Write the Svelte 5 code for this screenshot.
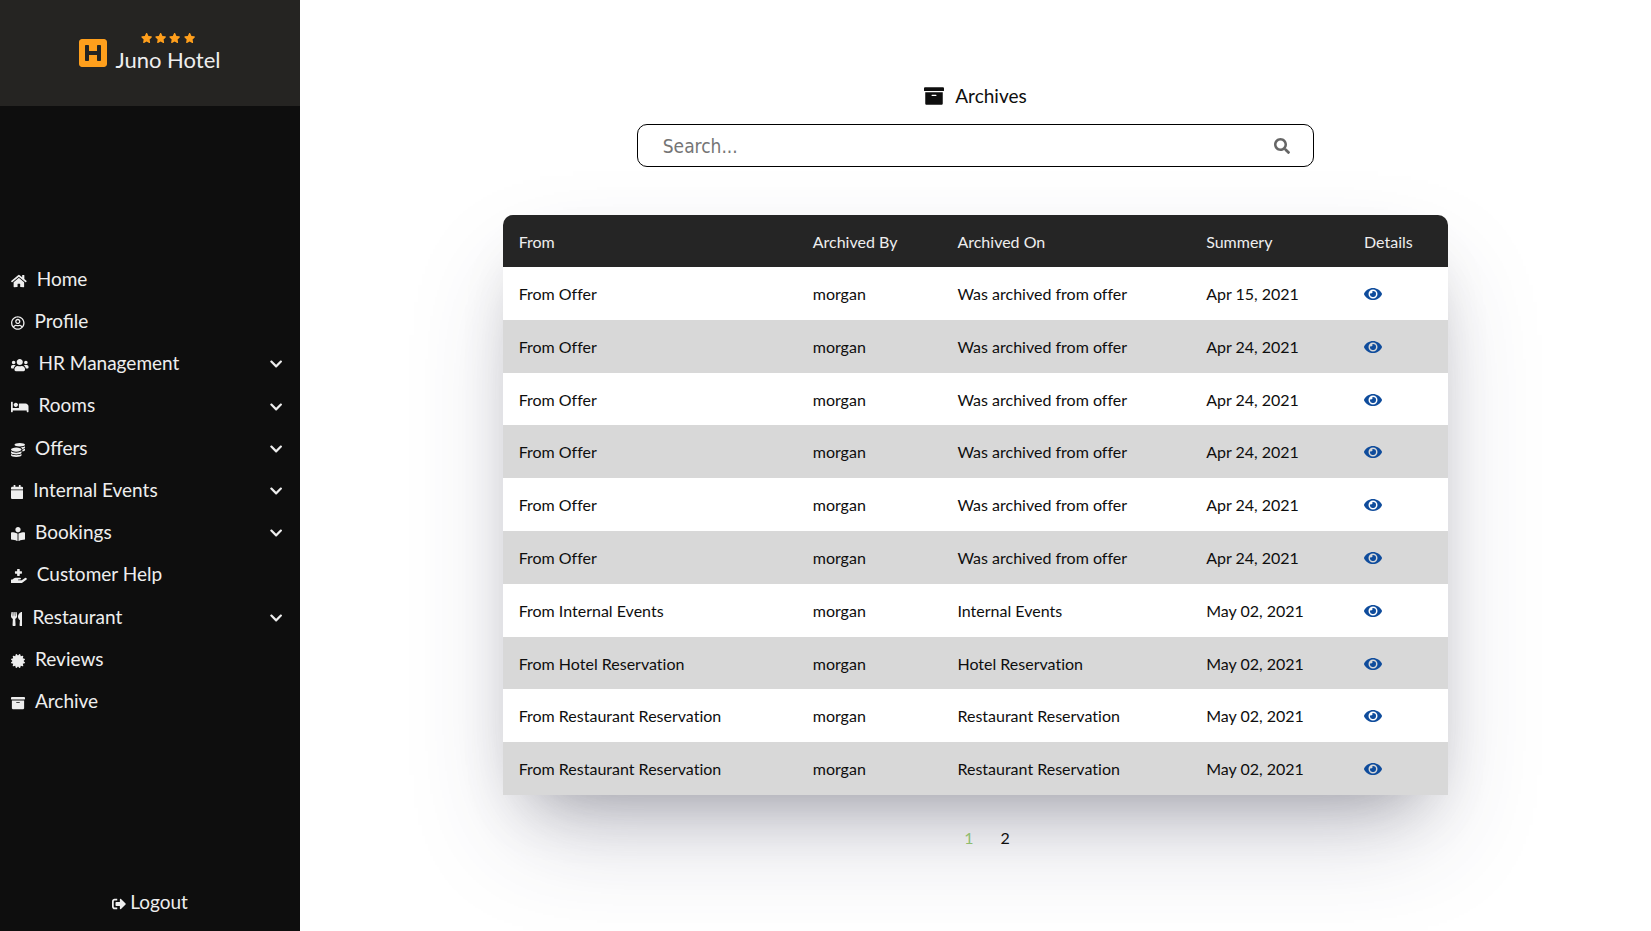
<script>
  const icons = {
    home: [576, 'M280.37 148.26L96 300.11V464a16 16 0 0 0 16 16l112.06-.29a16 16 0 0 0 15.92-16V368a16 16 0 0 1 16-16h64a16 16 0 0 1 16 16v95.64a16 16 0 0 0 16 16.05L464 480a16 16 0 0 0 16-16V300L295.67 148.26a12.19 12.19 0 0 0-15.3 0zM571.6 251.47L488 182.56V44.05a12 12 0 0 0-12-12h-56a12 12 0 0 0-12 12v72.61L318.47 43a48 48 0 0 0-61 0L4.34 251.47a12 12 0 0 0-1.6 16.9l25.5 31A12 12 0 0 0 45.15 301l235.22-193.74a12.19 12.19 0 0 1 15.3 0L530.9 301a12 12 0 0 0 16.9-1.6l25.5-31a12 12 0 0 0-1.7-16.93z'],
    profile: [496, 'M248 104c-53 0-96 43-96 96s43 96 96 96 96-43 96-96-43-96-96-96zm0 144c-26.5 0-48-21.5-48-48s21.5-48 48-48 48 21.5 48 48-21.5 48-48 48zm0-240C111 8 0 119 0 256s111 248 248 248 248-111 248-248S385 8 248 8zm0 448c-49.7 0-95.1-18.3-130.1-48.4 14.9-23 40.4-38.6 69.6-39.5 20.8 6.4 40.6 9.6 60.5 9.6s39.7-3.1 60.5-9.6c29.2 1 54.7 16.5 69.6 39.5-35 30.1-80.4 48.4-130.1 48.4zm162.7-84.1c-24.4-31.4-62.1-51.9-105.1-51.9-10.2 0-26 9.6-57.6 9.6-31.5 0-47.4-9.6-57.6-9.6-42.9 0-80.6 20.5-105.1 51.9C61.9 339.2 48 299.2 48 256c0-110.3 89.7-200 200-200s200 89.7 200 200c0 43.2-13.9 83.2-37.3 115.9z'],
    users: [640, 'M96 224c35.3 0 64-28.7 64-64s-28.7-64-64-64-64 28.7-64 64 28.7 64 64 64zm448 0c35.3 0 64-28.7 64-64s-28.7-64-64-64-64 28.7-64 64 28.7 64 64 64zm32 32h-64c-17.6 0-33.5 7.1-45.1 18.6 40.3 22.1 68.9 62 75.1 109.4h66c17.7 0 32-14.3 32-32v-32c0-35.3-28.7-64-64-64zm-256 0c61.9 0 112-50.1 112-112S381.9 32 320 32 208 82.1 208 144s50.1 112 112 112zm76.8 32h-8.3c-20.8 10-43.9 16-68.5 16s-47.6-6-68.5-16h-8.3C179.6 288 128 339.6 128 403.2V432c0 26.5 21.5 48 48 48h288c26.5 0 48-21.5 48-48v-28.8c0-63.6-51.6-115.2-115.2-115.2zm-223.7-13.4C161.5 263.1 145.6 256 128 256H64c-35.3 0-64 28.7-64 64v32c0 17.7 14.3 32 32 32h65.9c6.3-47.4 34.9-87.3 75.2-109.4z'],
    bed: [640, 'M176 256c44.11 0 80-35.89 80-80s-35.89-80-80-80-80 35.89-80 80 35.89 80 80 80zm352-128H304c-8.84 0-16 7.16-16 16v144H64V80c0-8.84-7.16-16-16-16H16C7.16 64 0 71.16 0 80v352c0 8.84 7.16 16 16 16h32c8.84 0 16-7.16 16-16v-48h512v48c0 8.84 7.16 16 16 16h32c8.84 0 16-7.16 16-16V240c0-61.86-50.14-112-112-112z'],
    coins: [512, 'M0 405.3V448c0 35.3 86 64 192 64s192-28.7 192-64v-42.7C342.7 434.4 267.2 448 192 448S41.3 434.4 0 405.3zM320 128c106 0 192-28.7 192-64S426 0 320 0 128 28.7 128 64s86 64 192 64zM0 300.4V352c0 35.3 86 64 192 64s192-28.7 192-64v-51.6c-41.3 34-116.9 51.6-192 51.6S41.3 334.4 0 300.4zm416 11c57.3-11.1 96-31.7 96-55.4v-42.7c-23.2 16.4-57.3 27.6-96 34.5v63.6zM192 160C86 160 0 195.8 0 240s86 80 192 80 192-35.8 192-80-86-80-192-80zm219.3 56.3c60-10.8 100.7-32 100.7-56.3v-42.7c-35.5 25.1-96.5 38.6-160.7 41.8 29.5 14.3 51.2 33.5 60 57.2z'],
    calendar: [448, 'M12 192h424c6.6 0 12 5.4 12 12v260c0 26.5-21.5 48-48 48H48c-26.5 0-48-21.5-48-48V204c0-6.6 5.4-12 12-12zm436-44v-36c0-26.5-21.5-48-48-48h-48V12c0-6.6-5.4-12-12-12h-40c-6.6 0-12 5.4-12 12v52H160V12c0-6.6-5.4-12-12-12h-40c-6.6 0-12 5.4-12 12v52H48C21.5 64 0 85.5 0 112v36c0 6.6 5.4 12 12 12h424c6.6 0 12-5.4 12-12z'],
    reader: [512, 'M352 96c0-53.02-42.98-96-96-96s-96 42.98-96 96 42.98 96 96 96 96-42.98 96-96zM233.59 241.1c-59.33-36.32-155.43-46.3-203.79-49.05C13.55 191.13 0 203.51 0 219.14v222.8c0 14.33 11.59 26.28 26.49 27.05 43.66 2.29 131.99 10.68 193.04 41.43 9.37 4.72 20.48-1.71 20.48-11.87V252.56c-.01-4.67-2.32-8.95-6.42-11.46zm248.61-49.05c-48.35 2.74-144.46 12.73-203.78 49.05-4.1 2.51-6.41 6.96-6.41 11.63v245.79c0 10.19 11.14 16.63 20.54 11.9 61.04-30.72 149.32-39.11 192.97-41.4 14.9-.78 26.49-12.73 26.49-27.06V219.14c-.01-15.63-13.56-28.01-29.81-27.09z'],
    help: [576, 'M159.88,175.82h64v64a16,16,0,0,0,16,16h64a16,16,0,0,0,16-16v-64h64a16,16,0,0,0,16-16v-64a16,16,0,0,0-16-16h-64v-64a16,16,0,0,0-16-16h-64a16,16,0,0,0-16,16v64h-64a16,16,0,0,0-16,16v64A16,16,0,0,0,159.88,175.82ZM568.07,336.13a39.91,39.91,0,0,0-55.93-8.47L392.47,415.84H271.86a16,16,0,0,1,0-32H330.1c16,0,30.75-10.87,33.37-26.61a32.06,32.06,0,0,0-31.62-37.38h-160a117.7,117.7,0,0,0-74.12,26.25l-46.5,37.74H15.87a16.11,16.11,0,0,0-16,16v96a16.11,16.11,0,0,0,16,16h347a104.8,104.8,0,0,0,61.7-20.27L559.6,392.05A40,40,0,0,0,568.07,336.13Z'],
    utensils: [416, 'M207.9 15.2c.8 4.7 16.1 94.5 16.1 128.8 0 52.3-27.8 89.6-68.9 104.6L168 486.7c.7 13.7-10.2 25.3-24 25.3H80c-13.7 0-24.7-11.5-24-25.3l12.9-238.1C27.7 233.6 0 196.2 0 144 0 109.6 15.3 19.9 16.1 15.2 19.3-5.1 61.4-5.4 64 16.3v141.2c1.3 3.4 15.1 3.2 16 0 1.4-25.3 7.9-139.2 8-141.8 3.3-20.8 44.7-20.8 47.9 0 .2 2.7 6.6 116.5 8 141.8.9 3.2 14.8 3.4 16 0V16.3c2.6-21.6 44.8-21.4 48-1.1zm119.2 285.7l-15 185.1c-1.2 14 9.9 26 23.9 26h56c13.3 0 24-10.7 24-24V24c0-13.2-10.7-24-24-24-82.5 0-221.4 178.5-64.9 300.9z'],
    certificate: [512, 'M458.622 255.92l45.985-45.005c13.708-12.977 7.316-36.039-10.664-40.339l-62.65-15.99 17.661-62.015c4.991-17.838-11.829-34.663-29.661-29.671l-61.994 17.667-15.984-62.671C337.085.197 313.765-6.276 300.99 7.228L256 53.57 211.011 7.229c-12.63-13.351-36.047-7.234-40.325 10.668l-15.984 62.671-61.995-17.667C74.87 57.907 58.056 74.738 63.046 92.572l17.661 62.015-62.65 15.99C.069 174.878-6.31 197.944 7.392 210.915l45.985 45.005-45.985 45.004c-13.708 12.977-7.316 36.039 10.664 40.339l62.65 15.99-17.661 62.015c-4.991 17.838 11.829 34.663 29.661 29.671l61.994-17.667 15.984 62.671c4.439 18.575 27.696 24.018 40.325 10.668L256 458.61l44.989 46.001c12.5 13.488 35.987 7.486 40.325-10.668l15.984-62.671 61.994 17.667c17.836 4.994 34.651-11.837 29.661-29.671l-17.661-62.015 62.65-15.99c17.987-4.302 24.366-27.367 10.664-40.339l-45.984-45.004z'],
    archive: [512, 'M32 448c0 17.7 14.3 32 32 32h384c17.7 0 32-14.3 32-32V160H32v288zm160-212c0-6.6 5.4-12 12-12h104c6.6 0 12 5.4 12 12v8c0 6.6-5.4 12-12 12H204c-6.6 0-12-5.4-12-12v-8zM480 32H32C14.3 32 0 46.3 0 64v48c0 8.8 7.2 16 16 16h480c8.8 0 16-7.2 16-16V64c0-17.7-14.3-32-32-32z'],
    logout: [512, 'M497 273L329 441c-15 15-41 4.5-41-17v-96H152c-13.3 0-24-10.7-24-24v-96c0-13.3 10.7-24 24-24h136V88c0-21.4 25.9-32 41-17l168 168c9.3 9.4 9.3 24.6 0 34zM192 436v-40c0-6.6-5.4-12-12-12H96c-17.7 0-32-14.3-32-32V160c0-17.7 14.3-32 32-32h84c6.6 0 12-5.4 12-12V76c0-6.6-5.4-12-12-12H96c-53 0-96 43-96 96v192c0 53 43 96 96 96h84c6.6 0 12-5.4 12-12z'],
    chevron: [448, 'M207.029 381.476L12.686 187.132c-9.373-9.373-9.373-24.569 0-33.941l22.667-22.667c9.357-9.357 24.522-9.375 33.901-.04L224 284.505l154.745-154.021c9.379-9.335 24.544-9.317 33.901.04l22.667 22.667c9.373 9.373 9.373 24.569 0 33.941L240.971 381.476c-9.373 9.372-24.569 9.372-33.942 0z'],
    eye: [576, 'M572.52 241.4C518.29 135.59 410.93 64 288 64S57.68 135.64 3.48 241.41a32.35 32.35 0 0 0 0 29.19C57.71 376.41 165.07 448 288 448s230.32-71.64 284.52-177.41a32.35 32.35 0 0 0 0-29.19zM288 400a144 144 0 1 1 144-144 143.93 143.93 0 0 1-144 144zm0-240a95.31 95.31 0 0 0-25.31 3.79 47.85 47.85 0 0 1-66.9 66.9A95.78 95.78 0 1 0 288 160z'],
    search: [512, 'M505 442.7L405.3 343c-4.5-4.5-10.6-7-17-7H372c27.6-35.3 44-79.7 44-128C416 93.1 322.9 0 208 0S0 93.1 0 208s93.1 208 208 208c48.3 0 92.7-16.4 128-44v16.3c0 6.4 2.5 12.5 7 17l99.7 99.7c9.4 9.4 24.6 9.4 33.9 0l28.3-28.3c9.4-9.4 9.4-24.6.1-34zM208 336c-70.7 0-128-57.2-128-128 0-70.7 57.2-128 128-128 70.7 0 128 57.2 128 128 0 70.7-57.2 128-128 128z'],
    star: [576, 'M259.3 17.8L194 150.2 47.9 171.5c-26.2 3.8-36.7 36.1-17.7 54.6l105.7 103-25 145.5c-4.5 26.3 23.2 46 46.4 33.7L288 439.6l130.7 68.7c23.2 12.2 50.9-7.4 46.4-33.7l-25-145.5 105.7-103c19-18.5 8.5-50.8-17.7-54.6L382 150.2 316.7 17.8c-11.7-23.6-45.6-23.9-57.4 0z'],
    hotel: [448, 'M448 80v352c0 26.51-21.49 48-48 48H48c-26.51 0-48-21.49-48-48V80c0-26.51 21.49-48 48-48h352c26.51 0 48 21.49 48 48zm-112 48h-32c-8.837 0-16 7.163-16 16v80H160v-80c0-8.837-7.163-16-16-16h-32c-8.837 0-16 7.163-16 16v224c0 8.837 7.163 16 16 16h32c8.837 0 16-7.163 16-16v-80h128v80c0 8.837 7.163 16 16 16h32c8.837 0 16-7.163 16-16V144c0-8.837-7.163-16-16-16z'],
  };

  const menu = [
    { label: 'Home', icon: 'home' },
    { label: 'Profile', icon: 'profile' },
    { label: 'HR Management', icon: 'users', sub: true },
    { label: 'Rooms', icon: 'bed', sub: true },
    { label: 'Offers', icon: 'coins', sub: true },
    { label: 'Internal Events', icon: 'calendar', sub: true },
    { label: 'Bookings', icon: 'reader', sub: true },
    { label: 'Customer Help', icon: 'help' },
    { label: 'Restaurant', icon: 'utensils', sub: true },
    { label: 'Reviews', icon: 'certificate' },
    { label: 'Archive', icon: 'archive' },
  ];

  const offer = ['From Offer', 'Was archived from offer'];
  const restaurant = ['From Restaurant Reservation', 'Restaurant Reservation'];
  const rows = [
    [...offer, 'Apr 15, 2021'],
    [...offer, 'Apr 24, 2021'],
    [...offer, 'Apr 24, 2021'],
    [...offer, 'Apr 24, 2021'],
    [...offer, 'Apr 24, 2021'],
    [...offer, 'Apr 24, 2021'],
    ['From Internal Events', 'Internal Events', 'May 02, 2021'],
    ['From Hotel Reservation', 'Hotel Reservation', 'May 02, 2021'],
    [...restaurant, 'May 02, 2021'],
    [...restaurant, 'May 02, 2021'],
  ];

  let query = $state('');
  let page = $state(1);
</script>

{#snippet icon(name)}
  <svg class="icon" viewBox="0 0 {icons[name][0]} 512" aria-hidden="true"><path d={icons[name][1]} /></svg>
{/snippet}

<div class="layout">
  <aside class="sidebar">
    <header class="brand">
      <span class="logo">{@render icon('hotel')}</span>
      <div class="brand-text">
        <div class="stars">
          {#each [1, 2, 3, 4] as n (n)}{@render icon('star')}{/each}
        </div>
        <span class="name">Juno Hotel</span>
      </div>
    </header>

    <nav class="menu">
      <ul>
        {#each menu as item (item.label)}
          <li>
            {#if item.sub}
              <button type="button" class="entry">
                <span class="label">{@render icon(item.icon)}{item.label}</span>
                <span class="arrow">{@render icon('chevron')}</span>
              </button>
            {:else}
              <a class="entry" href="#top">
                <span class="label">{@render icon(item.icon)}{item.label}</span>
              </a>
            {/if}
          </li>
        {/each}
      </ul>
    </nav>

    <footer class="logout">
      <a href="#logout">{@render icon('logout')}Logout</a>
    </footer>
  </aside>

  <main class="content">
    <h1>{@render icon('archive')}Archives</h1>

    <form class="search" onsubmit={(e) => e.preventDefault()}>
      <input type="text" aria-label="Search" placeholder="Search..." bind:value={query} />
      <button type="submit" aria-label="Search">{@render icon('search')}</button>
    </form>

    <table>
      <thead>
        <tr>
          <th class="from">From</th>
          <th class="by">Archived By</th>
          <th class="on">Archived On</th>
          <th class="summary">Summery</th>
          <th>Details</th>
        </tr>
      </thead>
      <tbody>
        {#each rows as [from, on, date]}
          <tr>
            <td>{from}</td>
            <td>morgan</td>
            <td>{on}</td>
            <td>{date}</td>
            <td><a class="view" href="#details" aria-label="Details">{@render icon('eye')}</a></td>
          </tr>
        {/each}
      </tbody>
    </table>

    <div class="pages">
      {#each [1, 2] as n (n)}
        <button type="button" class:current={page === n} onclick={() => (page = n)}>{n}</button>
      {/each}
    </div>
  </main>
</div>

<style>
  :global(body) {
    margin: 0;
    background: #fff;
  }

  .layout {
    display: flex;
    min-height: 100vh;
    font-family: Lato, sans-serif;
    font-size: 16px;
    line-height: 1.3;
    color: #0e0e0e;
  }

  .icon {
    height: 14px;
    fill: currentColor;
    vertical-align: -2px;
    flex: none;
  }

  a {
    color: inherit;
    text-decoration: none;
  }

  button {
    padding: 0;
    border: 0;
    background: none;
    font: inherit;
    color: inherit;
    cursor: pointer;
  }

  .sidebar {
    display: flex;
    flex-direction: column;
    flex: none;
    width: 300px;
    background: #0e0e0e;
    color: #eee;
    font-size: 19px;
    line-height: 1.38;
  }

  .brand {
    display: flex;
    align-items: center;
    justify-content: center;
    gap: 8px;
    height: 106px;
    background: #252422;
  }

  .logo {
    display: flex;
    color: #ff9f1c;
  }

  .logo .icon {
    height: 32px;
  }

  .brand-text {
    display: flex;
    flex-direction: column;
    align-items: center;
    gap: 2px;
    padding-top: 2px;
  }

  .stars {
    display: flex;
    gap: 3px;
    color: #ff9f1c;
  }

  .stars .icon {
    height: 10px;
  }

  .name {
    font-size: 22px;
  }

  .menu {
    display: flex;
    flex-direction: column;
    justify-content: center;
    flex: 1;
  }

  .menu ul {
    margin: 0;
    padding: 0;
    list-style: none;
  }

  .entry {
    display: flex;
    align-items: center;
    justify-content: space-between;
    box-sizing: border-box;
    width: 100%;
    padding: 8px 18px 8px 11px;
  }

  .label .icon {
    margin-right: 10px;
  }

  .arrow {
    display: flex;
    padding-top: 2px;
  }

  .logout {
    display: flex;
    align-items: center;
    justify-content: center;
    height: 57px;
  }

  .logout .icon {
    margin-right: 4px;
  }

  .content {
    display: flex;
    flex-direction: column;
    align-items: center;
    flex: 1;
    padding-top: 83px;
  }

  h1 {
    margin: 0 0 15px;
    font-size: 19px;
    line-height: 26px;
    font-weight: 400;
  }

  h1 .icon {
    height: 20px;
    margin-right: 11px;
    vertical-align: -3px;
  }

  .search {
    display: flex;
    align-items: center;
    width: 50%;
    height: 41px;
    margin-bottom: 48px;
    border: 1px solid #000;
    border-radius: 10px;
  }

  .search input {
    flex: 1;
    min-width: 0;
    padding: 0 25px;
    border: 0;
    outline: 0;
    background: none;
    font-family: "DejaVu Sans Condensed", "DejaVu Sans", sans-serif;
    font-size: 19px;
  }

  .search input::placeholder {
    color: #757575;
  }

  .search button {
    display: flex;
    margin-right: 23px;
    color: #666;
  }

  .search .icon {
    height: 16px;
  }

  table {
    width: 70%;
    border-collapse: collapse;
    border-radius: 10px 10px 0 0;
    overflow: hidden;
    background: #fff;
    font-variant-ligatures: none;
    box-shadow:
      rgba(50, 50, 93, 0.25) 0 50px 100px -20px,
      rgba(0, 0, 0, 0.3) 0 30px 60px -30px;
  }

  thead {
    background: #252525;
    color: #eee;
  }

  th,
  td {
    padding: 17px 16px 15px;
    text-align: left;
    font-weight: 400;
  }

  th {
    line-height: 20px;
  }

  .from {
    width: 31.1%;
  }

  .by {
    width: 15.3%;
  }

  .on {
    width: 26.3%;
  }

  .summary {
    width: 16.7%;
  }

  tbody tr:nth-child(even) {
    background: #d8d8d8;
  }

  .view {
    color: #0f4c9c;
  }

  .view .icon {
    height: 16px;
  }

  .pages {
    display: flex;
    gap: 27px;
    margin-top: 33px;
    padding-left: 23px;
  }

  .pages .current {
    color: #8fbc6f;
  }
</style>
